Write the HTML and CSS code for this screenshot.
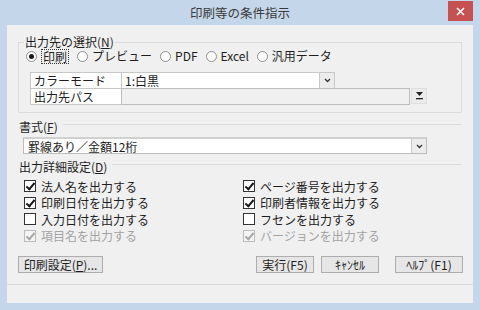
FILE: index.html
```html
<!DOCTYPE html>
<html lang="ja">

<head>
    <meta charset="UTF-8">
    <title>印刷等の条件指示</title>
    <link rel="stylesheet" href="styles.css">
</head>

<body>
    <div class="window">
        <!-- タイトルバー -->
        <div class="titlebar">
            <span class="title">印刷等の条件指示</span>
            <span class="close">
                <svg width="9" height="9" viewBox="0 0 9 9"><path d="M1 1L8 8M8 1L1 8" stroke="#fff" stroke-width="1.6"/></svg>
            </span>
        </div>

        <div class="client">
            <fieldset class="group">
                <legend>出力先の選択(<u>N</u>)</legend>
                <div class="radios">
                    <label class="radio on"><span class="circle"></span><span class="focus">印刷</span></label>
                    <label class="radio"><span class="circle"></span><span>プレビュー</span></label>
                    <label class="radio"><span class="circle"></span><span>PDF</span></label>
                    <label class="radio"><span class="circle"></span><span>Excel</span></label>
                    <label class="radio"><span class="circle"></span><span>汎用データ</span></label>
                </div>
                <div class="props">
                    <div class="prop-row">
                        <div class="key">カラーモード</div>
                        <div class="val color-val">
                            <span class="val-text">1:白黒</span>
                            <span class="drop">
                                <svg width="7" height="5" viewBox="0 0 7 5"><path d="M1 1L3.5 3.5L6 1" fill="none" stroke="#333" stroke-width="1.3"/></svg>
                            </span>
                        </div>
                    </div>
                    <div class="prop-row">
                        <div class="key">出力先パス</div>
                        <div class="val path-val"></div>
                        <span class="browse">
                            <svg width="9" height="8" viewBox="0 0 9 8"><path d="M1 0H8L4.5 4Z" fill="#222"/><rect x="1" y="6" width="7" height="1.3" fill="#222"/></svg>
                        </span>
                    </div>
                </div>
            </fieldset>

            <div class="head"><span>書式(<u>F</u>)</span><span class="rule"></span></div>
            <div class="combo">
                <span class="val-text">罫線あり／金額12桁</span>
                <span class="drop">
                    <svg width="7" height="5" viewBox="0 0 7 5"><path d="M1 1L3.5 3.5L6 1" fill="none" stroke="#333" stroke-width="1.3"/></svg>
                </span>
            </div>

            <div class="head detail-head"><span>出力詳細設定(<u>D</u>)</span><span class="rule"></span></div>
            <div class="checks">
                <label class="check on"><span class="box"></span>法人名を出力する</label>
                <label class="check on"><span class="box"></span>ページ番号を出力する</label>
                <label class="check on"><span class="box"></span>印刷日付を出力する</label>
                <label class="check on"><span class="box"></span>印刷者情報を出力する</label>
                <label class="check"><span class="box"></span>入力日付を出力する</label>
                <label class="check"><span class="box"></span>フセンを出力する</label>
                <label class="check on disabled"><span class="box"></span>項目名を出力する</label>
                <label class="check on disabled"><span class="box"></span>バージョンを出力する</label>
            </div>

            <div class="buttons">
                <button class="btn btn-setup">印刷設定(<u>P</u>)...</button>
                <button class="btn btn-run">実行(F5)</button>
                <button class="btn btn-cancel">ｷｬﾝｾﾙ</button>
                <button class="btn btn-help">ﾍﾙﾌﾟ(F1)</button>
            </div>
            <div class="separator"></div>
        </div>
    </div>
</body>

</html>
```

FILE: styles.css
```css
* {
    box-sizing: border-box;
}

body {
    margin: 0;
    font-family: "Noto Sans CJK JP", "Noto Sans CJK SC", sans-serif;
    font-size: 12px;
    color: #1e1e1e;
}

u {
    text-decoration: underline;
    text-underline-offset: 1px;
}

/* ウィンドウ枠 */
.window {
    width: 480px;
    height: 310px;
    background: #c4d6e9;
    padding: 0 7px 7px;
    display: flex;
    flex-direction: column;
}

.titlebar {
    height: 25px;
    display: grid;
    grid-template-columns: 1fr auto 1fr;
    align-items: start;
}

.title {
    grid-column: 2;
    line-height: 26px;
    font-size: 12.5px;
    color: #3a3a3a;
}

.close {
    grid-column: 3;
    justify-self: end;
    width: 25px;
    height: 20px;
    margin-top: 1px;
    background: #c75050;
    display: flex;
    align-items: center;
    justify-content: center;
}

/* クライアント領域 */
.client {
    flex: 1;
    background: #f0f0f0;
    padding: 10px 11px 0;
    display: flex;
    flex-direction: column;
}

.group {
    margin: 0;
    border: 1px solid #dcdcdc;
    padding: 0 8px 7px 7px;
    min-width: 0;
}

.group legend {
    margin-left: -2px;
    padding: 0 1px;
    line-height: 14px;
}

/* ラジオボタン */
.radios {
    display: flex;
    align-items: center;
    height: 14px;
    gap: 8px;
}

.radio {
    display: flex;
    align-items: center;
    gap: 4px;
    line-height: 14px;
}

.circle {
    width: 11px;
    height: 11px;
    border: 1px solid #8f8f8f;
    border-radius: 50%;
    background: #fcfcfc;
    display: flex;
    align-items: center;
    justify-content: center;
}

.radio.on .circle::after {
    content: "";
    width: 5px;
    height: 5px;
    border-radius: 50%;
    background: #1a1a1a;
}

.focus {
    border: 1px dotted #333;
    padding: 0 1px;
    line-height: 13px;
}

/* カラーモード・出力先パス */
.props {
    margin: 9px 0 0 4px;
}

.prop-row {
    display: flex;
    height: 17px;
}

.prop-row + .prop-row {
    margin-top: -1px;
}

.key {
    width: 92px;
    border: 1px solid #c8c8c8;
    background: #fff;
    padding: 0 3px;
    line-height: 15px;
}

.val {
    margin-left: -1px;
    border: 1px solid #c8c8c8;
    display: flex;
    align-items: center;
}

.color-val {
    width: 214px;
    background: #fff;
    padding-left: 3px;
}

.path-val {
    width: 289px;
    background: #f0f0f0;
    border-color: #bdbdbd;
}

.val-text {
    flex: 1;
    line-height: 15px;
}

.drop {
    width: 15px;
    height: 100%;
    border-left: 1px solid #c8c8c8;
    background: #ececec;
    display: flex;
    align-items: center;
    justify-content: center;
}

.browse {
    width: 16px;
    height: 16px;
    margin-left: 1px;
    background: #ebebeb;
    border: 1px solid #e0e0e0;
    display: flex;
    align-items: center;
    justify-content: center;
}

/* 見出し線 */
.head {
    display: flex;
    margin-top: 7px;
    padding-left: 1px;
    line-height: 14px;
}

.rule {
    flex: 1;
    margin: 4px 0 0 5px;
    border-top: 1px solid #dcdcdc;
    height: 0;
}

.detail-head {
    margin-top: 6px;
}

.combo {
    margin: 3px 35px 0 5px;
    height: 17px;
    background: #fff;
    border: 1px solid #bcbcbc;
    border-top: 2px solid #d0d0d0;
    padding-left: 4px;
    display: flex;
    align-items: center;
}

/* チェックボックス */
.checks {
    margin-top: 4px;
    padding-left: 6px;
    display: grid;
    grid-template-columns: 219px 1fr;
    grid-auto-rows: 16.5px;
}

.check {
    display: flex;
    align-items: center;
    gap: 5px;
}

.box {
    width: 12px;
    height: 12px;
    border: 1px solid #333;
    background: #fff;
    position: relative;
}

.check.on .box::after {
    content: "";
    position: absolute;
    left: 3px;
    top: 0;
    width: 3px;
    height: 7px;
    border: solid #1a1a1a;
    border-width: 0 2px 2px 0;
    transform: rotate(40deg);
}

.check.disabled {
    color: #a3a3a3;
}

.check.disabled .box {
    border-color: #bcbcbc;
    background: #f4f4f4;
}

.check.disabled .box::after {
    border-color: #a8a8a8;
}

/* ボタン */
.buttons {
    display: flex;
    margin-top: 12px;
    margin-right: -1px;
}

.btn {
    height: 17px;
    padding: 0;
    font: inherit;
    color: #1e1e1e;
    background: #e6e6e6;
    border: 1px solid #adadad;
    line-height: 15px;
}

.btn-setup {
    width: 85px;
    margin-right: auto;
}

.btn-run {
    width: 58px;
}

.btn-cancel {
    width: 58px;
    margin-left: 7px;
}

.btn-help {
    width: 68px;
    margin-left: 16px;
}

.separator {
    margin: 11px -11px 0;
    border-top: 1px solid #dadada;
}
```
